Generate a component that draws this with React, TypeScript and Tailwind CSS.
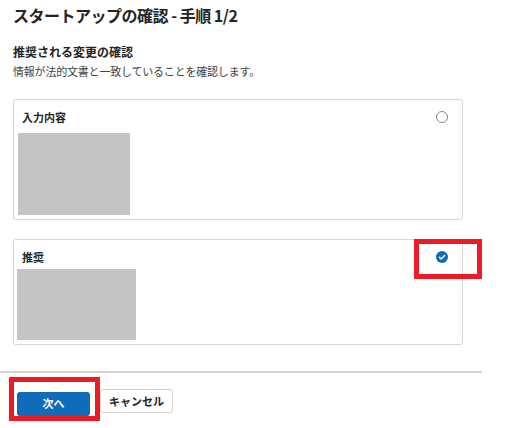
export default function App() {
  return (
    <div className="w-[520px] h-[428px] bg-white font-['Noto_Sans_CJK_JP','Noto_Sans',sans-serif] text-[#242424]">
      <div className="w-[482px]">
        <div className="pl-[13px] pr-[19px]">
          <h1 className="mt-[5px] text-[16px] leading-[20px] font-semibold tracking-[-0.5px]">スタートアップの確認 - 手順 1/2</h1>
          <h2 className="mt-[19px] text-[12px] leading-[16px] font-bold">推奨される変更の確認</h2>
          <p className="mt-[3px] text-[11px] leading-[16px] text-[#424242] tracking-[-0.2px]">情報が法的文書と一致していることを確認します。</p>

          {/* current input */}
          <div className="mt-[20px] h-[121px] border border-[#d6d6d6] rounded-[3px] pt-[9px]">
            <div className="flex items-center justify-between pl-[8px] pr-[14px]">
              <span className="text-[11px] leading-[16px] font-bold">入力内容</span>
              <span className="w-[12px] h-[12px] rounded-full border border-[#8a8a8a]" />
            </div>
            <div className="mt-[8px] ml-[4px] w-[112px] h-[82px] bg-[#c4c4c4]" />
          </div>

          {/* recommended */}
          <div className="relative mt-[19px] h-[106px] border border-[#d6d6d6] rounded-[3px] pt-[9px]">
            <div className="flex items-center justify-between pl-[8px] pr-[14px]">
              <span className="text-[11px] leading-[16px] font-bold">推奨</span>
              <svg width="12" height="12" viewBox="0 0 12 12">
                <circle cx="6" cy="6" r="6" fill="#0f6cbd" />
                <path d="M3.4 6.2 L5.2 7.9 L8.6 4.4" fill="none" stroke="#fff" strokeWidth="1.4" strokeLinecap="round" strokeLinejoin="round" />
              </svg>
            </div>
            <div className="mt-[4px] ml-[3px] w-[119px] h-[71px] bg-[#c4c4c4]" />
            <div className="absolute left-[400px] top-[-1px] w-[68px] h-[40px] border-[5px] border-[#ed1c24]" />
          </div>
        </div>

        <div className="mt-[26px] h-[2px] bg-[#d6d6d6]" />

        <div className="mt-[16px] pl-[17px] flex">
          <div className="relative">
            <button className="w-[73px] h-[24px] rounded-[3px] bg-[#0f6cbd] text-white text-[11px] font-bold leading-none">次へ</button>
            <div className="absolute left-[-8px] top-[-12px] w-[91px] h-[44px] border-[5px] border-[#ed1c24]" />
          </div>
          <button className="ml-[10px] w-[73px] h-[24px] rounded-[3px] border border-[#d1d1d1] bg-white text-[11px] font-bold leading-none text-[#242424]">キャンセル</button>
        </div>
      </div>
    </div>
  );
}
